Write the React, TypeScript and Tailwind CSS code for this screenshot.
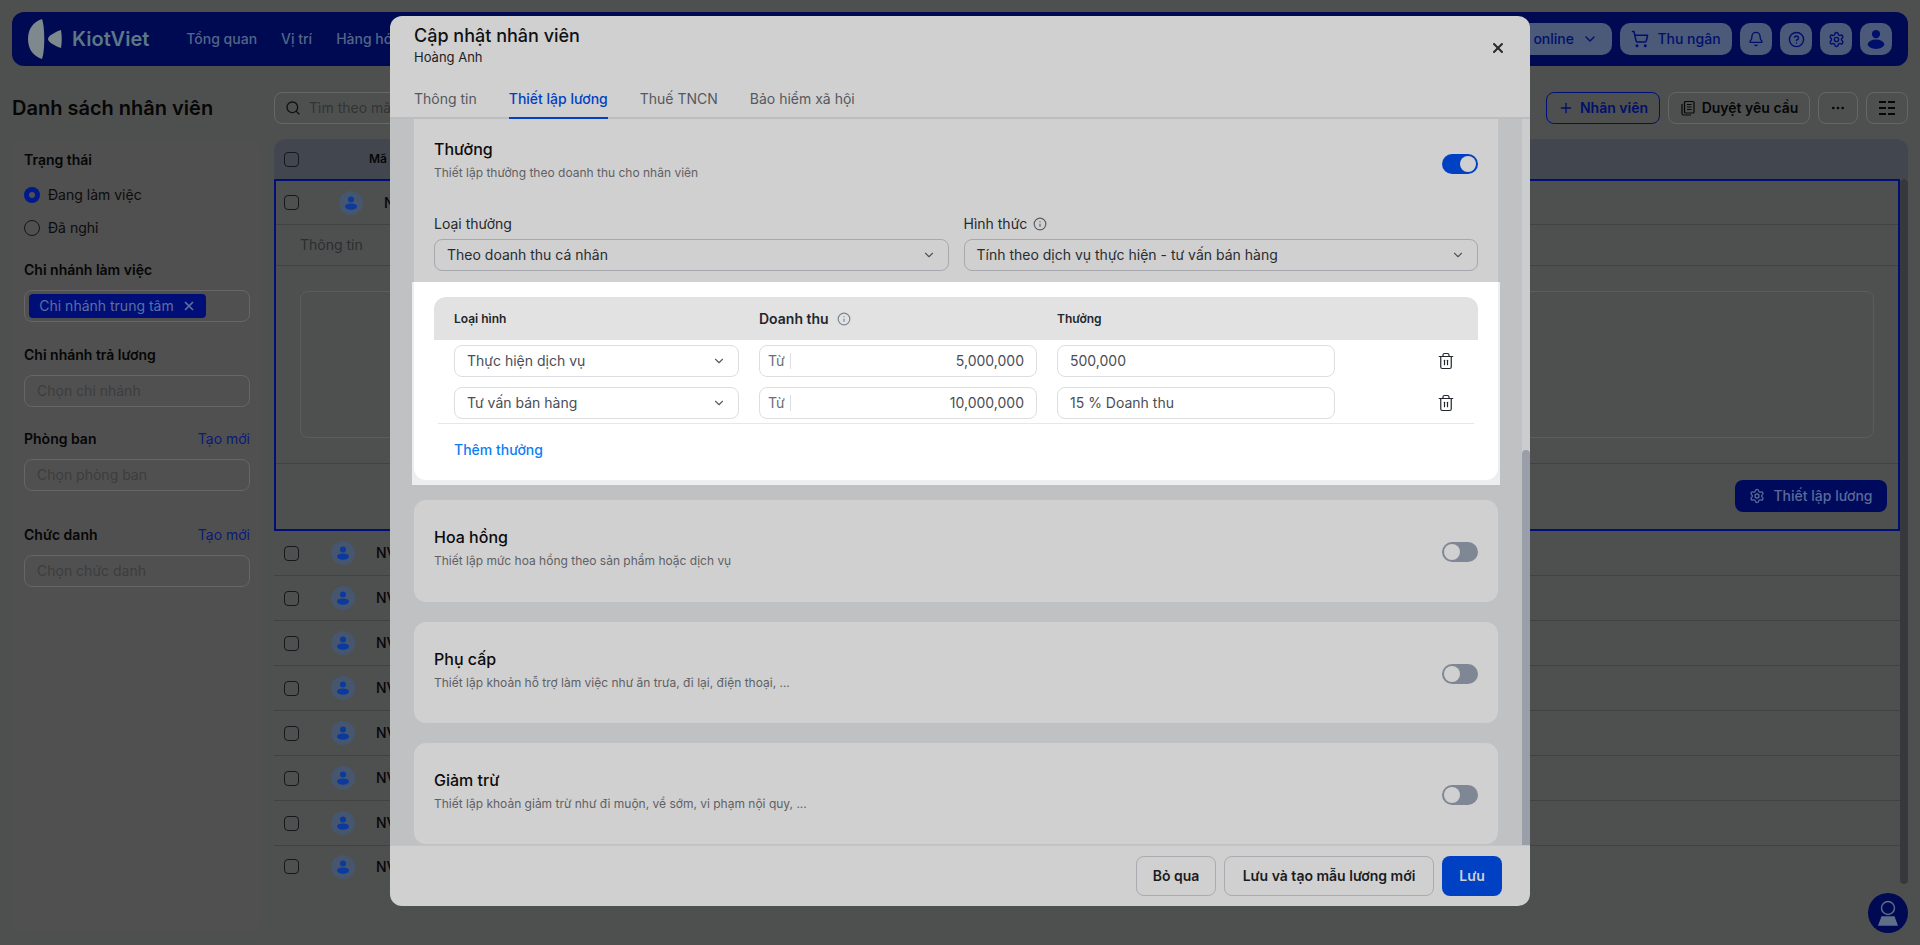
import { Bell, ChevronDown, CircleHelp, Ellipsis, Info, Plus, Search, Settings, ShoppingCart, Trash2, X } from "lucide-react";

const Avatar = () => (
  <div className="flex h-6 w-6 items-center justify-center rounded-full bg-[#46566f]">
    <svg width="16" height="16" viewBox="0 0 16 16" fill="#0a3a9e">
      <circle cx="8" cy="4.6" r="3" />
      <ellipse cx="8" cy="11.6" rx="6" ry="3.2" />
    </svg>
  </div>
);

const Check = () => <div className="h-[15px] w-[15px] rounded-[4px] border border-[#15171c]" />;

const IconBtn = ({ children }: { children: React.ReactNode }) => (
  <div className="flex h-8 w-8 items-center justify-center rounded-[10px] bg-[#4b5a78] text-[#000f6c]">{children}</div>
);

const Field = ({ label, placeholder, action, className }: { label: string; placeholder: string; action?: boolean; className?: string }) => (
  <div className={className}>
    <div className="flex h-5 items-center justify-between text-sm">
      <span className="font-semibold text-[#060606]">{label}</span>
      {action && <span className="text-[#0a1a78]">Tạo mới</span>}
    </div>
    <div className="mt-2.5 flex h-8 items-center rounded-lg border border-[#666] px-3 text-sm text-[#3c3d3f]">{placeholder}</div>
  </div>
);

const Sidebar = () => (
  <aside className="h-[794px] w-[250px] shrink-0 rounded-xl bg-[#505050] px-3 pt-[11px]">
    <div className="h-5 text-sm font-semibold text-[#060606]">Trạng thái</div>
    <div className="mt-[15px] flex h-5 items-center gap-2 text-sm text-[#0c0c0c]">
      <span className="flex h-4 w-4 items-center justify-center rounded-full bg-[#001a8c]">
        <span className="h-1.5 w-1.5 rounded-full bg-[#505050]" />
      </span>
      Đang làm việc
    </div>
    <div className="mt-[13px] flex h-5 items-center gap-2 text-sm text-[#0c0c0c]">
      <span className="h-4 w-4 rounded-full border border-[#151515]" />
      Đã nghỉ
    </div>
    <div className="mt-[22px] h-5 text-sm font-semibold text-[#060606]">Chi nhánh làm việc</div>
    <div className="mt-2.5 flex h-8 items-center rounded-lg border border-[#666] px-1">
      <span className="flex h-6 w-[177px] items-center justify-center gap-2 rounded bg-[#000f78] text-sm text-[#5c6ea0]">
        Chi nhánh trung tâm <X size={14} strokeWidth={3} />
      </span>
    </div>
    <Field className="mt-[23px]" label="Chi nhánh trả lương" placeholder="Chọn chi nhánh" />
    <Field className="mt-[22px]" label="Phòng ban" placeholder="Chọn phòng ban" action />
    <Field className="mt-[34px]" label="Chức danh" placeholder="Chọn chức danh" action />
  </aside>
);

const EmployeeRow = ({ last }: { last?: boolean }) => (
  <div className={`flex items-center border-[#424242] pl-2.5 ${last ? "h-[41px]" : "h-[45px] border-b"}`}>
    <Check />
    <div className="ml-[32px]"><Avatar /></div>
    <span className="ml-[21px] text-sm font-medium text-[#060606]">NV000012</span>
  </div>
);

const Table = () => (
  <main className="min-w-0 flex-1">
    <div className="flex h-[40px] items-center rounded-t-xl bg-[#42464f] pl-2.5 text-xs font-semibold text-[#060606]">
      <Check />
      <span className="ml-[70px]">Mã nhân viên</span>
    </div>
    <div className="flex">
      <div className="min-w-0 flex-1">
        <div className="h-[352px] border-2 border-[#000f78]">
          <div className="flex h-11 items-center border-b border-[#424242] pl-2">
            <Check />
            <div className="ml-[40px]"><Avatar /></div>
            <span className="ml-[21px] text-sm font-medium text-[#060606]">NV000013</span>
          </div>
          <div className="flex h-[41px] items-center border-b border-[#424242] pl-6 text-sm text-[#2c2d2f]">Thông tin</div>
          <div className="mx-6 mt-[25px] h-[147px] rounded-lg border border-[#5c5c5c]" />
          <div className="mt-[25px] flex h-[65px] justify-end border-t border-[#424242] pr-[11px] pt-4">
            <div className="flex h-8 w-[152px] items-center justify-center gap-2 rounded-lg bg-[#000a5c] text-sm font-medium text-[#5a6a98]">
              <Settings size={16} /> Thiết lập lương
            </div>
          </div>
        </div>
        {Array.from({ length: 8 }).map((_, i) => (
          <EmployeeRow key={i} last={i === 7} />
        ))}
      </div>
      <div className="h-[705px] w-2 rounded bg-[#37383b]" />
    </div>
  </main>
);

const TopBar = () => (
  <header className="mx-3 mt-3 flex h-[54px] items-center justify-between rounded-xl bg-[#000a52] pl-4 pr-4">
    <div className="flex items-center">
      <svg width="34" height="42" viewBox="0 0 34 42" fill="#7d898c">
        <path d="M14 1 C5 4 0 11 0 21 C0 31 5 38 14 41 C17 33 17 9 14 1 Z" />
        <path d="M33 12 C27 14 20 18 20 21 C20 24 27 28 33 30 C34 24 34 18 33 12 Z" />
      </svg>
      <span className="ml-2.5 text-[20px] font-semibold text-[#5d7885]">KiotViet</span>
      <nav className="ml-[37px] flex gap-6 text-sm font-medium text-[#52668a]">
        <span>Tổng quan</span>
        <span>Vị trí</span>
        <span>Hàng hóa</span>
      </nav>
    </div>
    <div className="flex items-center gap-2">
      <div className="flex h-8 items-center gap-2 rounded-[10px] bg-[#4b5a78] px-3.5 text-sm font-medium text-[#000f6c]">
        Bán online <ChevronDown size={16} />
      </div>
      <div className="flex h-8 w-28 items-center justify-center gap-2 rounded-[10px] bg-[#4b5a78] text-sm font-medium text-[#000f6c]">
        <ShoppingCart size={18} /> Thu ngân
      </div>
      <IconBtn><Bell size={16} /></IconBtn>
      <IconBtn><CircleHelp size={17} /></IconBtn>
      <IconBtn><Settings size={17} /></IconBtn>
      <IconBtn>
        <svg width="22" height="22" viewBox="0 0 16 16" fill="#000f6c">
          <circle cx="8" cy="4.4" r="3" />
          <ellipse cx="8" cy="11.8" rx="6" ry="3.4" />
        </svg>
      </IconBtn>
    </div>
  </header>
);

const Toolbar = () => (
  <div className="mx-3 mt-[26px] flex h-8 items-center">
    <h1 className="w-[262px] text-[20px] font-semibold text-[#060606]">Danh sách nhân viên</h1>
    <div className="flex h-8 w-[600px] items-center gap-2 rounded-lg border border-[#666] px-2.5 text-sm text-[#333]">
      <Search size={16} className="text-[#111]" /> Tìm theo mã, tên nhân viên
    </div>
    <div className="ml-auto flex items-center gap-2">
      <div className="flex h-8 w-[114px] items-center justify-center gap-1.5 rounded-lg border border-[#000f78] text-sm font-semibold text-[#000f6c]">
        <Plus size={16} /> Nhân viên
      </div>
      <div className="flex h-8 w-[142px] items-center justify-center gap-1.5 rounded-lg border border-[#666] text-sm font-semibold text-[#060606]">
        <svg width="16" height="16" viewBox="0 0 16 16" fill="none" stroke="#060606" strokeWidth="1.2">
          <rect x="4.5" y="1.5" width="9.5" height="11.5" rx="1" />
          <path d="M2 4v9.5A1.5 1.5 0 0 0 3.5 15H11M7 4.5h4.5M7 7h4.5M7 9.5h4.5" />
        </svg>
        Duyệt yêu cầu
      </div>
      <div className="flex h-8 w-10 items-center justify-center rounded-lg border border-[#666] text-[#060606]">
        <Ellipsis size={16} />
      </div>
      <div className="flex h-8 w-[42px] items-center justify-center rounded-lg border border-[#666]">
        <svg width="16" height="14" viewBox="0 0 16 14" stroke="#060606" strokeWidth="2">
          <path d="M0 1h7M9 1h7M0 7h7M9 7h7M0 13h7M9 13h7" />
        </svg>
      </div>
    </div>
  </div>
);

const Toggle = ({ on }: { on?: boolean }) => (
  <div className={`mt-[17px] flex h-5 w-9 items-center rounded-full px-0.5 ${on ? "justify-end bg-[#0041c4]" : "bg-[#7f8794]"}`}>
    <div className="h-4 w-4 rounded-full bg-[#d0d0d0]" />
  </div>
);

const DimSelect = ({ label, value }: { label: React.ReactNode; value: string }) => (
  <div>
    <div className="flex h-5 items-center gap-1.5 text-sm text-[#26282c]">{label}</div>
    <div className="mt-[5px] flex h-8 items-center justify-between rounded-lg border border-[#a6a8ad] pl-3 pr-3 text-sm text-[#2a2c30]">
      {value}
      <ChevronDown size={14} className="text-[#50535a]" />
    </div>
  </div>
);

const rewardRows = [
  { type: "Thực hiện dịch vụ", from: "5,000,000", bonus: "500,000" },
  { type: "Tư vấn bán hàng", from: "10,000,000", bonus: "15 % Doanh thu" },
];

const RewardRow = ({ type, from, bonus }: { type: string; from: string; bonus: string }) => (
  <div className="flex h-8 items-center pl-5 text-sm text-[#4a4d55]">
    <div className="flex h-8 w-[285px] items-center justify-between rounded-lg border border-[#dcdee2] pl-3 pr-3">
      {type}
      <ChevronDown size={14} className="text-[#5a5d64]" />
    </div>
    <div className="ml-5 flex h-8 w-[278px] items-center rounded-lg border border-[#dcdee2] pl-2 pr-3">
      <span className="w-[22px] text-[#6b6e75]">Từ</span>
      <span className="h-4 w-px bg-[#dcdee2]" />
      <span className="flex-1 text-right">{from}</span>
    </div>
    <div className="ml-5 flex h-8 w-[278px] items-center rounded-lg border border-[#dcdee2] px-3">{bonus}</div>
    <Trash2 size={18} strokeWidth={1.6} className="ml-[102px] text-[#23262c]" />
  </div>
);

const CollapsedCard = ({ title, desc, className }: { title: string; desc: string; className: string }) => (
  <section className={`flex items-start justify-between rounded-xl bg-[#d0d0d0] px-5 pt-[25px] ${className}`}>
    <div>
      <h3 className="text-base leading-6 font-medium text-[#0b0b0b]">{title}</h3>
      <p className="mt-1 text-xs text-[#5f6064]">{desc}</p>
    </div>
    <Toggle />
  </section>
);

const Modal = () => (
  <div className="absolute top-4 left-[390px] flex h-[890px] w-[1140px] flex-col overflow-hidden rounded-xl bg-[#d0d0d0]">
    <div className="flex h-[103px] shrink-0 flex-col">
      <div className="flex justify-between pt-2 pr-6 pl-6">
        <div>
          <h2 className="text-lg leading-6 font-medium text-[#111]">Cập nhật nhân viên</h2>
          <p className="text-[13px] leading-[18px] text-[#1f2024]">Hoàng Anh</p>
        </div>
        <X size={16} strokeWidth={3} className="mt-4 mr-0 text-[#26282c]" />
      </div>
      <div className="mt-auto flex gap-8 border-b-2 border-[#bcbdbf] px-6 text-sm">
        <span className="-mb-0.5 border-b-2 border-transparent pb-2 text-[#55585f]">Thông tin</span>
        <span className="-mb-0.5 border-b-2 border-[#0041c4] pb-2 font-medium text-[#0041c4]">Thiết lập lương</span>
        <span className="-mb-0.5 border-b-2 border-transparent pb-2 text-[#55585f]">Thuế TNCN</span>
        <span className="-mb-0.5 border-b-2 border-transparent pb-2 text-[#55585f]">Bảo hiểm xã hội</span>
      </div>
    </div>

    <div className="flex min-h-0 flex-1 bg-[#c0c1c3]">
      <div className="min-w-0 flex-1 px-6">
        <section className="rounded-b-xl">
          <div className="bg-[#d0d0d0] px-5 pt-[18px] pb-[11px]">
            <div className="flex items-start justify-between">
              <div>
                <h3 className="text-base leading-6 font-medium text-[#0b0b0b]">Thưởng</h3>
                <p className="mt-1 text-xs text-[#5f6064]">Thiết lập thưởng theo doanh thu cho nhân viên</p>
              </div>
              <Toggle on />
            </div>
            <div className="mt-[33px] grid grid-cols-2 gap-[15px]">
              <DimSelect label="Loại thưởng" value="Theo doanh thu cá nhân" />
              <DimSelect
                label={<>Hình thức <Info size={14} className="text-[#5a5d64]" /></>}
                value="Tính theo dịch vụ thực hiện - tư vấn bán hàng"
              />
            </div>
          </div>
          {/* phần được làm nổi bật */}
          <div className="-mx-0.5 bg-[#eceef0] px-0.5 pb-[5px]">
            <div className="h-[198px] rounded-b-xl bg-white px-5 pt-[15px]">
              <div className="flex h-[43px] items-center rounded-t-xl bg-[#e2e2e2] pl-5 text-xs font-semibold text-[#24262b]">
                <span className="w-[305px]">Loại hình</span>
                <span className="flex w-[298px] items-center gap-2 text-sm">
                  Doanh thu <Info size={14} className="text-[#7a8496]" />
                </span>
                <span>Thưởng</span>
              </div>
              <div className="flex flex-col gap-2.5 pt-[5px]">
                {rewardRows.map((r) => (
                  <RewardRow key={r.type} {...r} />
                ))}
              </div>
              <div className="mx-1 mt-1 border-t border-[#e6e7e9]" />
              <div className="mt-4 pl-5 text-sm font-medium text-[#0b7ef5]">Thêm thưởng</div>
            </div>
          </div>
        </section>
        <CollapsedCard className="mt-[15px] h-[102px]" title="Hoa hồng" desc="Thiết lập mức hoa hồng theo sản phẩm hoặc dịch vụ" />
        <CollapsedCard className="mt-5 h-[101px]" title="Phụ cấp" desc="Thiết lập khoản hỗ trợ làm việc như ăn trưa, đi lại, điện thoại, ..." />
        <CollapsedCard className="mt-5 h-[101px]" title="Giảm trừ" desc="Thiết lập khoản giảm trừ như đi muộn, về sớm, vi phạm nội quy, ..." />
      </div>
      <div className="flex w-2 flex-col bg-[#cbccce]">
        <div className="mt-[331px] flex-1 rounded-t bg-[#9a9ea8]" />
      </div>
    </div>

    <div className="flex h-[61px] shrink-0 items-center justify-end gap-2 border-t border-[#c4c4c4] pr-7 text-sm font-semibold">
      <div className="flex h-10 w-20 items-center justify-center rounded-lg border border-[#a9abb0] text-[#1a1c22]">Bỏ qua</div>
      <div className="flex h-10 w-[210px] items-center justify-center rounded-lg border border-[#a9abb0] text-[#1a1c22]">Lưu và tạo mẫu lương mới</div>
      <div className="flex h-10 w-[60px] items-center justify-center rounded-lg bg-[#0041c4] text-[#d0d0d0]">Lưu</div>
    </div>
  </div>
);

export default function App() {
  return (
    <div className="relative h-[945px] w-full overflow-hidden bg-[#4e5050] [font-family:Inter,'Noto_Sans',sans-serif]">
      <TopBar />
      <Toolbar />
      <div className="mt-[15px] flex gap-3 px-3">
        <Sidebar />
        <Table />
      </div>
      <Modal />
      <div className="absolute top-[893px] right-3 flex h-10 w-10 items-center justify-center rounded-full bg-[#000a52]">
        <svg width="24" height="28" viewBox="0 0 24 28" fill="none" stroke="#5f6f8a" strokeWidth="1.4">
          <circle cx="12" cy="9" r="6.5" />
          <path d="M6 18h12l3 8H3z" fill="#5f6f8a" />
        </svg>
      </div>
    </div>
  );
}
